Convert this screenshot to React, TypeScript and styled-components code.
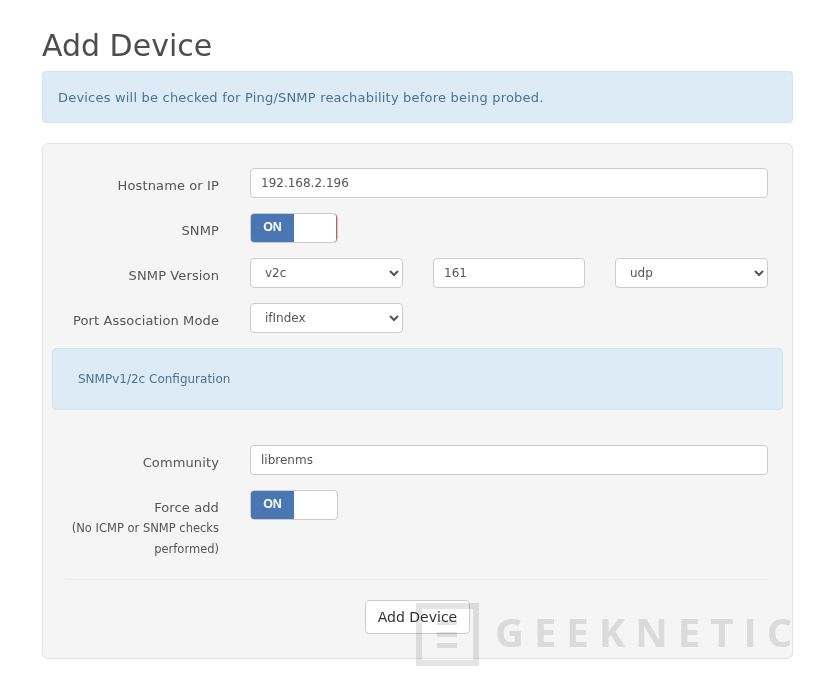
import React from 'react';
import styled, { createGlobalStyle } from 'styled-components';

const Global = createGlobalStyle`
  html, body { margin: 0; padding: 0; background: #fff; }
  body { font-family: "DejaVu Sans", Verdana, sans-serif; color: #555; }
  * { box-sizing: border-box; }
`;

const Page = styled.div`
  position: relative;
  width: 821px;
  height: 685px;
  padding: 29px 28px 0 42px;
  overflow: hidden;
`;

const Title = styled.h1`
  margin: 0 0 9px;
  height: 33px;
  font-size: 30px;
  line-height: 33px;
  font-weight: 400;
  color: #4d4d4d;
`;

const Alert = styled.div`
  height: 52px;
  padding-left: 15px;
  display: flex;
  align-items: center;
  background: #dcebf6;
  border: 1px solid #cfe5f0;
  border-radius: 4px;
  color: #4a7391;
  font-size: 13px;
  letter-spacing: 0.2px;
  margin-bottom: 20px;
`;

const Panel = styled.form`
  height: 516px;
  padding: 24px 9px 0;
  background: #f5f5f5;
  border: 1px solid #e3e3e3;
  border-radius: 6px;
`;

const Row = styled.div<{ $gap?: number }>`
  display: grid;
  grid-template-columns: 167px 518px;
  column-gap: 31px;
  margin-bottom: ${(p) => p.$gap ?? 15}px;
  align-items: start;
`;

const Label = styled.label`
  display: block;
  text-align: right;
  font-size: 13px;
  letter-spacing: 0.12px;
  line-height: 17px;
  padding-top: 9px;
  color: #555;
  white-space: nowrap;
`;

const Note = styled.span`
  display: block;
  font-size: 11.5px;
  letter-spacing: 0;
  line-height: 21px;
  margin-top: 2px;
`;

const Input = styled.input`
  width: 100%;
  height: 30px;
  padding: 0 10px;
  background: #fff;
  border: 1px solid #ccc;
  border-radius: 4px;
  font-family: inherit;
  font-size: 12px;
  color: #555;
`;

const Select = styled.select`
  width: 100%;
  height: 30px;
  padding: 0 10px;
  background: #fff;
  border: 1px solid #ccc;
  border-radius: 4px;
  font-family: inherit;
  font-size: 12px;
  color: #555;
`;

const Triple = styled.div`
  display: grid;
  grid-template-columns: 153px 152px 153px;
  column-gap: 30px;
`;

const Half = styled.div`
  width: 153px;
`;

const Switch = styled.div<{ $edge?: boolean }>`
  display: flex;
  width: 88px;
  height: 30px;
  background: #fff;
  border: 1px solid #ccc;
  border-radius: 4px;
  overflow: hidden;
  ${(p) => (p.$edge ? 'box-shadow: inset -1px 0 0 #c0615a;' : '')}
`;

const SwitchOn = styled.span`
  width: 43px;
  display: flex;
  align-items: center;
  justify-content: center;
  background: #4a76b3;
  color: #fff;
  font-family: "Liberation Sans", Arial, sans-serif;
  font-weight: 700;
  font-size: 12.5px;
  padding-bottom: 2px;
`;

const Well = styled.div`
  height: 62px;
  padding-left: 25px;
  margin-bottom: 35px;
  display: flex;
  align-items: center;
  background: #dcebf6;
  border: 1px solid #cfe5f0;
  border-radius: 4px;
  color: #4a7391;
  font-size: 12px;
`;

const Divider = styled.hr`
  margin: 19px 15px 20px;
  border: 0;
  border-top: 1px solid #eeeeee;
`;

const Actions = styled.div`
  display: flex;
  justify-content: center;
`;

const Button = styled.button`
  width: 105px;
  height: 34px;
  padding: 0;
  background: #fff;
  border: 1px solid #ccc;
  border-radius: 4px;
  font-family: inherit;
  font-size: 14px;
  color: #333;
`;

const Watermark = styled.div`
  position: absolute;
  left: 416px;
  top: 603px;
  display: flex;
  align-items: center;
  gap: 16px;
  mix-blend-mode: multiply;
  pointer-events: none;
`;

const WatermarkText = styled.span`
  font-family: "Open Sans", sans-serif;
  font-weight: 700;
  font-size: 40px;
  line-height: 50px;
  letter-spacing: 10px;
  color: #e4e4e4;
  margin-top: -5px;
  white-space: nowrap;
`;

const WatermarkLogo = () => (
  <svg width="63" height="63" viewBox="0 0 63 63" fill="none">
    <rect x="3" y="3" width="57" height="57" stroke="#e4e4e4" strokeWidth="6" />
    <rect x="21" y="17" width="20" height="5" fill="#e4e4e4" />
    <rect x="21" y="29" width="20" height="5" fill="#e4e4e4" />
    <rect x="21" y="40" width="20" height="5" fill="#e4e4e4" />
  </svg>
);

export default function App() {
  return (
    <Page>
      <Global />
      <Title>Add Device</Title>
      <Alert>Devices will be checked for Ping/SNMP reachability before being probed.</Alert>
      <Panel>
        <Row>
          <Label>Hostname or IP</Label>
          <Input defaultValue="192.168.2.196" />
        </Row>
        <Row>
          <Label>SNMP</Label>
          <Switch $edge><SwitchOn>ON</SwitchOn></Switch>
        </Row>
        <Row>
          <Label>SNMP Version</Label>
          <Triple>
            <Select defaultValue="v2c">
              <option>v1</option>
              <option>v2c</option>
              <option>v3</option>
            </Select>
            <Input defaultValue="161" />
            <Select defaultValue="udp">
              <option>udp</option>
              <option>tcp</option>
            </Select>
          </Triple>
        </Row>
        <Row>
          <Label>Port Association Mode</Label>
          <Half>
            <Select defaultValue="ifIndex">
              <option>ifIndex</option>
              <option>ifName</option>
            </Select>
          </Half>
        </Row>
        <Well>SNMPv1/2c Configuration</Well>
        <Row>
          <Label>Community</Label>
          <Input defaultValue="librenms" />
        </Row>
        <Row $gap={0}>
          <Label>
            Force add
            <Note>(No ICMP or SNMP checks<br />performed)</Note>
          </Label>
          <Switch><SwitchOn>ON</SwitchOn></Switch>
        </Row>
        <Divider />
        <Actions>
          <Button type="button">Add Device</Button>
        </Actions>
      </Panel>
      <Watermark>
        <WatermarkLogo />
        <WatermarkText>GEEKNETIC</WatermarkText>
      </Watermark>
    </Page>
  );
}
